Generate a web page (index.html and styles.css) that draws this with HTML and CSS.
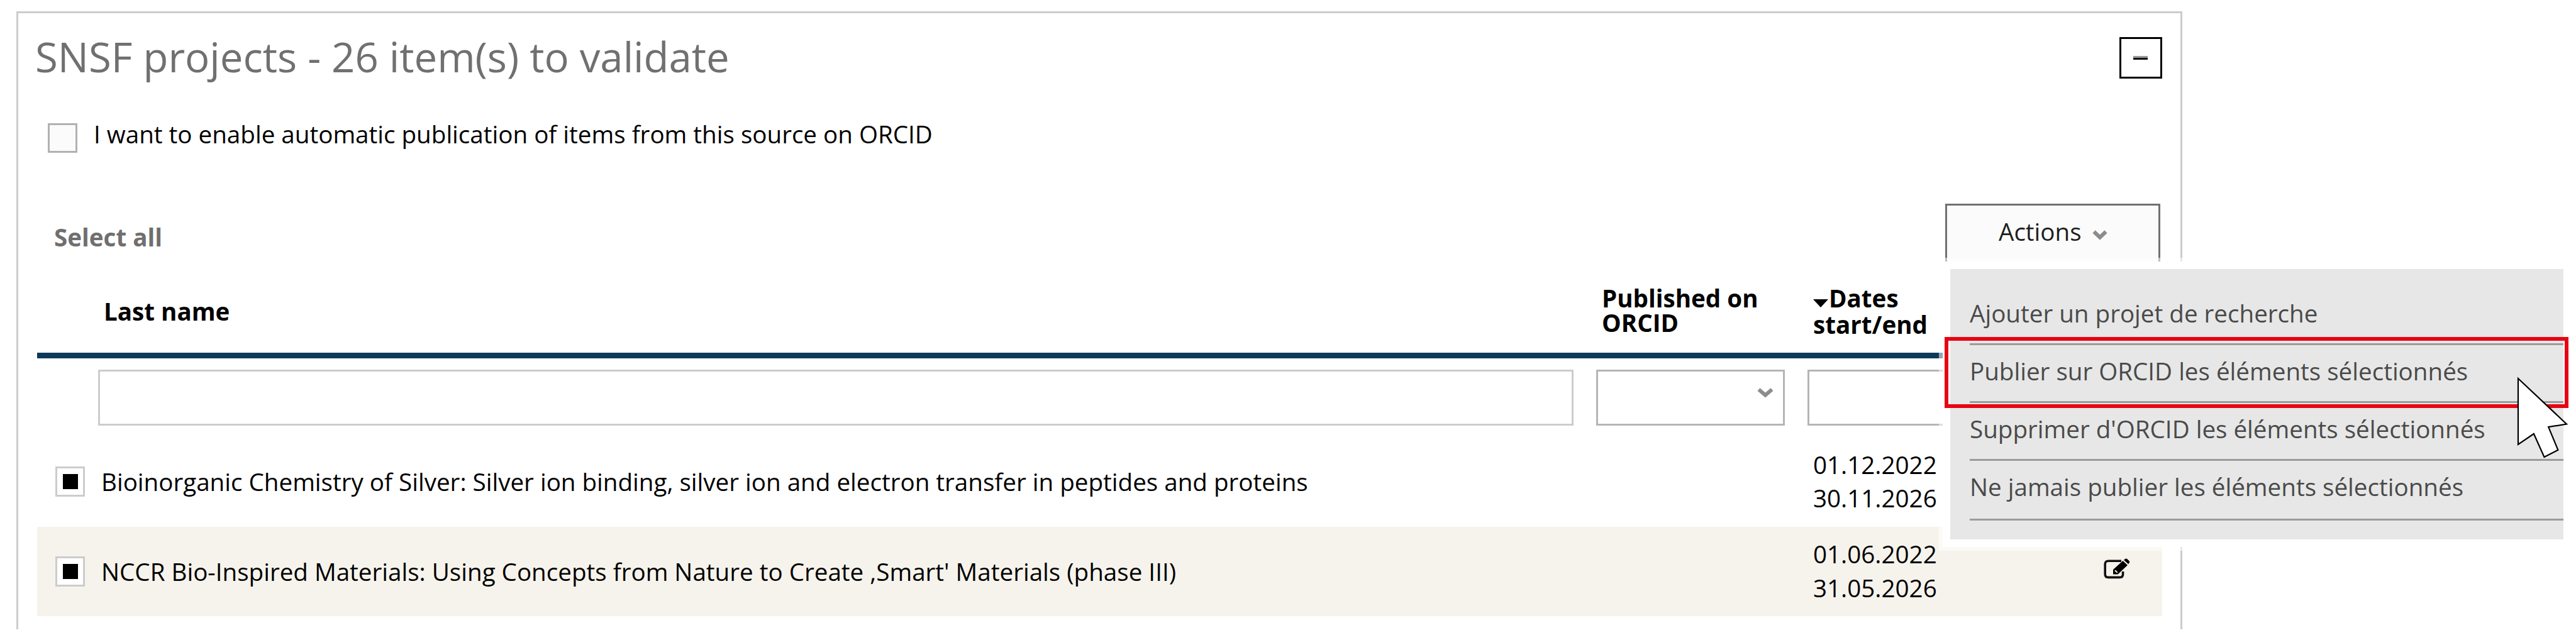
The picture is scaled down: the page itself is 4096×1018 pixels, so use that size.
FILE: index.html
```html
<!DOCTYPE html>
<html lang="en">
<head>
  <meta charset="UTF-8">
  <meta name="viewport" content="width=device-width, initial-scale=1.0">
  <title>SNSF projects</title>
  <link rel="stylesheet" href="styles.css">
</head>
<body>

  <div class="panel">
    <div class="panel-header">
      <h1>SNSF projects - 26 item(s) to validate</h1>
      <button class="collapse-btn" aria-label="Collapse">
        <svg width="23" height="6" viewBox="0 0 23 6"><rect width="23" height="3" fill="#999"/><rect y="3" width="23" height="3" fill="#111"/></svg>
      </button>
    </div>

    <label class="auto-publish">
      <span class="checkbox"></span>
      <span class="auto-text">I want to enable automatic publication of items from this source on ORCID</span>
    </label>

    <div class="toolbar">
      <a class="select-all">Select all</a>
      <button class="actions-btn">
        <span>Actions</span>
        <svg class="caret" width="24" height="16" viewBox="0 0 24 16"><path d="M2.5 2.5 L12 11.5 L21.5 2.5"/></svg>
      </button>
    </div>

    <div class="grid table-head">
      <div></div>
      <div class="head-cell head-name">Last name</div>
      <div class="head-cell head-pub">Published on<br>ORCID</div>
      <div class="head-cell head-dates"><svg class="sort" width="24" height="13" viewBox="0 0 24 13"><path d="M0 0 H24 L12 13 Z"/></svg>Dates<br>start/end</div>
    </div>

    <div class="grid filters">
      <div></div>
      <div class="field"></div>
      <div class="field select">
        <svg class="caret" width="26" height="16" viewBox="0 0 26 16"><path d="M2.5 2.5 L13 11.5 L23.5 2.5"/></svg>
      </div>
      <div class="field dark"></div>
    </div>

    <div class="grid row">
      <div class="check-cell"><span class="checkbox checked"></span></div>
      <div class="name">Bioinorganic Chemistry of Silver: Silver ion binding, silver ion and electron transfer in peptides and proteins</div>
      <div></div>
      <div class="dates"><span>01.12.2022<br>30.11.2026</span></div>
    </div>

    <div class="grid row odd">
      <div class="check-cell"><span class="checkbox checked"></span></div>
      <div class="name">NCCR Bio-Inspired Materials: Using Concepts from Nature to Create ,Smart' Materials (phase III)</div>
      <div></div>
      <div class="dates">
        <span>01.06.2022<br>31.05.2026</span>
        <svg class="edit" width="42" height="33" viewBox="0 0 42 33">
          <path class="edit-box" d="M28 4.3 H7.5 Q2.2 4.3 2.2 9 V25.5 Q2.2 30.4 7.5 30.4 H25.5 Q30.6 30.4 30.6 25.5 V21"/>
          <path d="M15 25.5 V18 L30.5 4 L38 11 L22.5 25.5 Z M32 2.8 L34.5 .8 Q36 0 37.5 1.3 L40.8 4.4 Q42 6 40.6 7.4 L39.2 9.2 Z"/>
          <path class="edit-tip" d="M18 19.2 L21.8 22.9"/>
        </svg>
      </div>
    </div>
  </div>

  <!-- Actions dropdown, lies over the panel -->
  <ul class="menu">
    <li>Ajouter un projet de recherche</li>
    <li>Publier sur ORCID les éléments sélectionnés</li>
    <li>Supprimer d'ORCID les éléments sélectionnés</li>
    <li>Ne jamais publier les éléments sélectionnés</li>
  </ul>
  <div class="highlight"></div>
  <svg class="cursor" width="84" height="134" viewBox="0 0 84 134">
    <path d="M3 4 L80 76.5 L51.2 81.2 L66.4 117.8 L44.5 129 L27.9 92 L3 109 Z"/>
  </svg>

</body>
</html>
```
FILE: styles.css
```css
* {
  margin: 0;
  padding: 0;
  box-sizing: border-box;
}

body {
  position: relative;
  width: 4096px;
  height: 1018px;
  overflow: hidden;
  padding: 18px 0 0 26px;
  background-color: #fff;
  color: #000;
  font-family: 'Open Sans', 'Noto Sans', sans-serif;
  font-size: 38.6px;
  line-height: 40px;
  white-space: nowrap;
}

button {
  font: inherit;
  border-radius: 0;
}

.panel {
  width: 3444px;
  height: 983px;
  padding: 38px 29px 0 30px;
  border: 3px solid #ccc;
  border-bottom: none;
}

.panel-header {
  display: flex;
  justify-content: space-between;
  align-items: flex-start;
  height: 66px;
}

h1 {
  margin-left: -3px;
  font-size: 65.3px;
  line-height: 62px;
  font-weight: 400;
  color: #707070;
}

.collapse-btn {
  display: flex;
  align-items: center;
  justify-content: center;
  width: 68px;
  height: 66px;
  padding-right: 2px;
  border: 3px solid #000;
  background-color: #fff;
}

.checkbox {
  width: 47px;
  height: 47px;
  border: 3px solid #b1b1b1;
  background-color: #fbfbfb;
}

.checkbox.checked {
  display: flex;
  align-items: center;
  justify-content: center;
  height: 48px;
  border-color: #ccc;
  background-color: #fff;
}

.checkbox.checked::after {
  content: '';
  width: 24px;
  height: 24px;
  background-color: #000;
}

.auto-publish {
  display: flex;
  align-items: flex-start;
  gap: 26px;
  margin-top: 71px;
  padding-left: 17px;
}

.auto-text {
  line-height: 34px;
}

.toolbar {
  display: flex;
  justify-content: space-between;
  align-items: flex-start;
  height: 100px;
  margin-top: 81px;
  padding: 0 3px 0 27px;
}

.select-all {
  padding-top: 33px;
  font-weight: 700;
  color: #6f6f6f;
}

.actions-btn {
  display: flex;
  gap: 17px;
  width: 342px;
  height: 100px;
  padding: 21px 0 0 82px;
  border: 3px solid #707070;
  background-color: #fbfbfb;
  color: #1e1e1e;
}

.caret {
  fill: none;
  stroke: #8c8c8c;
  stroke-width: 6;
}

.actions-btn .caret {
  margin-top: 18px;
}

.grid {
  display: grid;
  grid-template-columns: 97px 2382px 336px 1fr;
}

.table-head {
  height: 146px;
  border-bottom: 9px solid #0e3a59;
  font-weight: 700;
}

.head-cell {
  padding-left: 9px;
}

.head-name {
  padding-top: 51px;
}

.head-pub {
  padding-top: 31px;
  line-height: 39px;
}

.head-dates {
  padding-top: 29px;
  line-height: 42px;
}

.sort {
  margin-right: 1px;
}

.filters {
  height: 125px;
  padding-top: 18px;
}

.field {
  height: 89px;
  margin-right: 36px;
  border: 3px solid #ccc;
}

.field.select {
  display: flex;
  justify-content: flex-end;
  padding: 26px 15px 0 0;
}

.field.select,
.field.dark {
  border-color: #b5b5b5;
}

.row {
  align-items: center;
  height: 142.5px;
}

.row.odd {
  background-color: #f6f3ec;
}

.check-cell {
  display: flex;
  padding-left: 29px;
}

.name {
  padding-left: 5px;
}

.dates {
  display: flex;
  justify-content: space-between;
  align-items: center;
  padding: 0 51px 0 9px;
  line-height: 53.5px;
}

.edit {
  margin-bottom: 9px;
}

.edit-box {
  fill: none;
  stroke: #111;
  stroke-width: 3.6;
}

.edit-tip {
  stroke: #f6f3ec;
  stroke-width: 2;
}

/* Dropdown menu */
.menu {
  position: absolute;
  left: 3101px;
  top: 428px;
  width: 975px;
  height: 430px;
  padding: 29px 0 0 31px;
  list-style: none;
  background-color: #e7e7e7;
  color: #4a4a4a;
  box-shadow: 0 0 0 12px #fff, 0 0 0 18px rgba(255, 255, 255, 0.55);
}

.menu li {
  height: 92px;
  padding-top: 21px;
  border-bottom: 3px solid #9b9b9b;
}

.menu li:last-child {
  height: 95px;
}

.highlight {
  position: absolute;
  left: 3092px;
  top: 536px;
  width: 992px;
  height: 113px;
  border: 6px solid #e60613;
}

.cursor {
  position: absolute;
  left: 4001px;
  top: 598px;
  fill: #fff;
  stroke: #000;
  stroke-width: 2.2;
}
```
